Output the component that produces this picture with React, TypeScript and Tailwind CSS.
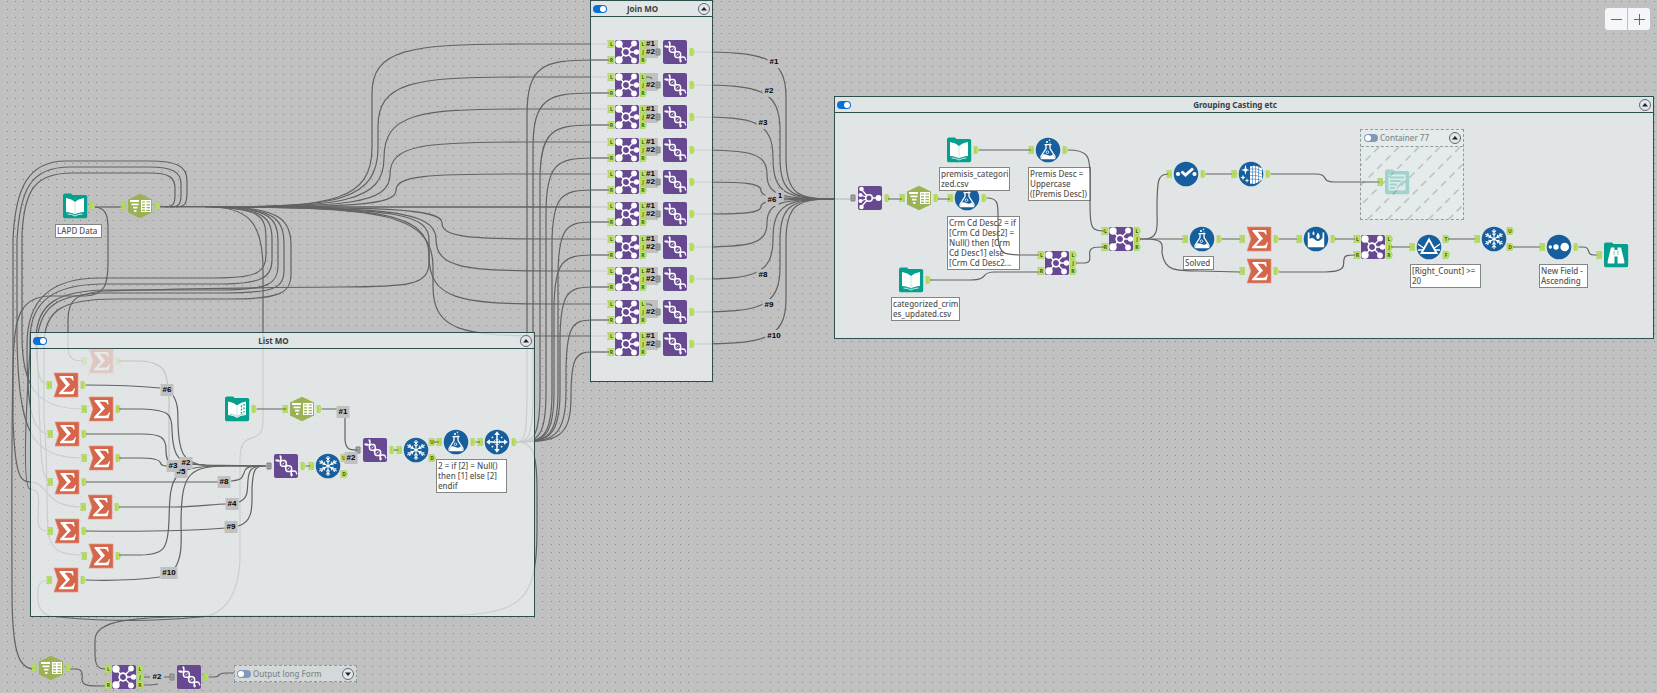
import React from "react";

type Pt = [number, number];
type Kind =
  | "book" | "report" | "hex" | "sigma" | "join" | "union" | "fan" | "formula"
  | "unique" | "cross" | "check" | "cleanse" | "rain" | "filter" | "sort" | "browse" | "output";

const WIRE = "#626262";

/* Smooth orthogonal wire that turns into a vertical run at mx. */
function wire(x1: number, y1: number, mx: number, x2: number, y2: number, cap = 45, cap2 = cap) {
  const s = Math.sign(y2 - y1) || 1;
  const d = Math.abs(y2 - y1) / 2;
  const a = Math.min(d, cap) * s;
  const b = Math.min(d, cap2) * s;
  return `M${x1} ${y1}C${x1 + (mx - x1) * 0.75} ${y1} ${mx} ${y1 + a * 0.1} ${mx} ${y1 + a}L${mx} ${y2 - b}C${mx} ${y2 - b * 0.1} ${mx + (x2 - mx) * 0.25} ${y2} ${x2} ${y2}`;
}

const rowY = Array.from({ length: 10 }, (_, k) => Math.round(52.2 + 32.45 * k));

const leftX = [372, 378, 384, 390, 396, 420, 442, 436, 429, 433];
const rightX = [527, 533, 540, 546, 552, 558, 554, 560, 566, 571];
const outX = [786, 780, 773, 767, 761, 761, 767, 773, 780, 786];

const backWires: string[] = [
  "M95 207H122",
  "M160 207H613",
  "M160 206.500H330",
  ...rowY.map((y, k) => (k === 5 ? "M300 207H613" : wire(215, 207, leftX[k], k > 4 ? 550 : 520, y - 8, 60, 50) + "H613")),
  ...rowY.map((y, k) => wire(516, 442, rightX[k], 592, y + 8, 50, 55)),
  ...rowY.map((y, k) => wire(696, y, outX[k], 835, 199, 45, 42) + "H852"),
  "M165 207C173 207 175 204 175 195V188C175 177 168 173 150 173H72C35 173 24 190 22 235V335C22 385 35 409 83 409",
  "M170 207C180 207 181 203 181 194V184C181 172 172 167 150 167H70C30 167 20 190 17 240V340C19 430 30 458 83 458",
  "M176 207C186 207 187 202 187 192V180C187 166 176 161 150 161H66C27 161 15 190 13 240V420C15 475 20 482 30 482C50 482 42 507 82 507",
  "M95 207C105 208 108 214 108 228V262C108 285 105 295 85 296H50C22 297 16 315 14 345",
  "M14 345C11 390 12 560 12 590C12 650 18 669 34 669",
  "M205 207C262 208 266 216 266 240V255C266 272 258 278 215 278H100C50 278 27 300 27 345C27 400 30 434 50 434",
  "M210 207C265 208 272 218 272 240V260C272 278 262 284 215 284H100C55 285 30 300 30 340V350C22 470 26 488 30 489C42 490 38 500 38 520C38 529 42 531 50 531",
  "M215 207C270 208 278 218 278 242V265C278 284 268 290 220 290H105C60 291 36 302 36 340C37 378 40 385 50 385",
  "M220 207C276 208 284 220 284 245V270C284 288 274 293 225 293H105C60 294 38 304 37 345C41 460 40 476 50 482",
  "M225 207C282 208 291 222 291 245V274C291 293 280 299 230 299H115C62 299 44 310 44 345V420C48 460 46 500 48 530C50 552 62 555 83 555",
  "M215 207C250 209 263 225 263 270V420C263 450 240 425 240 460V560C238 595 225 615 200 617C140 623 80 620 50 616C35 612 38 595 38 590C38 583 42 580 50 580",
  "M240 207C400 208 429 215 429 240V262C429 285 410 287 340 287C180 288 150 290 104 291C75 294 68 300 68 320V345C68 358 72 361 83 361",
  "M516 442C532 442 537 450 537 490V530C537 605 520 614 440 616H210C130 617 95 620 95 640V655C95 665 98 669 105 669",
  "M69 669H76C84 669 82 677 82 679C82 686 88 686 105 686",
  "M144 677H150M164 677H170M144 685H150C155 685 157 684 158 684",
  "M208 677H214C222 677 216 673 226 673H234",
];

const frontWires: string[] = [
  "M86 385C120 385 140 386 160 388M172 394C178 402 178 410 178 425C179 450 182 464 205 465L266 466",
  "M119 409H142C168 410 172 413 172 430C173 458 178 464 205 465",
  "M86 434H142C162 434 166 438 166 450C166 459 168 462 172 465",
  "M119 458H140C152 458 158 459 160 462C161 466 164 466 170 466",
  "M86 482H218M231 481C243 480 242 477 244 473C245 467 249 467 256 466",
  "M119 507H175C200 507 212 504 226 504M239 502C249 498 247 490 248 480C249 469 252 467 260 466",
  "M86 531C160 532 200 530 226 528M238 526C254 522 252 505 252 488C253 470 255 467 262 466",
  "M119 555H140C165 555 168 548 169 520C170 475 172 467 220 466H266",
  "M86 580C120 581 145 579 160 577M175 568C183 555 181 540 181 520C182 478 186 466 225 466",
  "M186 464L220 466H266",
  "M257 409H286M322 409H338M345 418V440C346 450 350 450 357 450",
  "M306 466H310M394 450H398M434 442H439M476 442H480",
  ...rowY.map((y) => `M590 ${y + 8}H609`),
  "M646 77C650 77 651 77 652 79M646 304C650 304 651 304 652 306",
  "M888 199H902M938 199H950M979 150H1031M1068 150C1088 150 1090 156 1090 175V205C1090 229 1092 231 1104 231",
  "M987 198C998 198 998 204 998 215V238C999 255 1005 255 1025 255H1039",
  "M930 280H970C990 280 980 272 994 272H1039",
  "M1076 263H1083C1094 263 1088 255 1090 251C1091 247 1096 247 1104 247",
  "M1140 239H1144C1160 239 1157 225 1157 210C1157 180 1158 174 1168 174",
  "M1140 239H1183M1144 239C1166 239 1162 245 1162 252C1164 271 1175 271 1200 271L1240 272",
  "M1206 174H1232M1271 174H1315C1330 174 1320 182 1334 182H1379",
  "M1222 239H1240M1279 239H1297M1335 239H1355M1279 272H1325C1350 272 1342 262 1344 260C1344 255 1348 255 1355 255",
  "M1391 247H1410M1448 239H1475M1513 247H1540M1579 247H1583C1592 247 1585 255 1594 255H1597",
];

/* ---------- tool glyphs, each centred on 0,0 in a 24px box ---------- */

const spokes = [0, 60, 120, 180, 240, 300];

/* One strand of the double helix that runs down the diagonal of the tile. */
function strand(sign: number) {
  let d = "";
  for (let n = 0; n <= 36; n++) {
    const t = n / 36;
    const w = sign * 3.1 * Math.sin(Math.PI * (3 * t + 0.5));
    d += `${n ? "L" : "M"}${(-8 + 16 * t + w * 0.72).toFixed(2)} ${(-8 + 16 * t - w * 0.72).toFixed(2)}`;
  }
  return d;
}
const strandA = strand(1);
const strandB = strand(-1);

function Glyph({ kind }: { kind: Kind }) {
  const purple = <rect x={-12} y={-12} width={24} height={24} rx={2} fill="#674991" />;
  const blue = <circle r={12.3} fill="#175f9c" />;
  const folder = <path d="M-12 -10.500Q-12 -12.500 -10 -12.500H-4L-2.500 -11H10.500Q12.200 -11 12.200 -9.500V10.500Q12.200 12.200 10.500 12.200H-10.500Q-12 12.200 -12 10.500Z" fill="#049f8d" />;
  switch (kind) {
    case "book":
      return <g>{folder}<path d="M-9 -8Q-3 -7 0 -4Q3 -7 9 -8V6Q3 6.500 0 8.500Q-3 6.500 -9 6Z" fill="#fff" /><path d="M0 -4V8" stroke="#b4dfd9" strokeWidth={0.800} /><path d="M-7.500 8Q-3 8 0 10Q3 8 7.500 8" stroke="#fff" strokeWidth={0.800} fill="none" /></g>;
    case "report":
      return <g>{folder}<path d="M-9 -7.500Q-3 -6.500 0 -3.500Q3 -6.500 9 -7.500V6Q3 6.500 0 9Q-3 6.500 -9 6Z" fill="#fff" /><path d="M0 -3.500V7" stroke="#b4dfd9" strokeWidth={0.800} /><path d="M-7.500 5Q-3 5.500 0 7.500Q3 5.500 7.500 5" stroke="#7fcbc0" strokeWidth={0.800} fill="none" /><path d="M4.500 -3.500v1.700M4.500 -0.200v1.700M4.500 3v1.400M7 -5v1.700M7 -1.500v1.700M7 2v1.400" stroke="#049f8d" strokeWidth={1.300} /></g>;
    case "hex":
      return <g><path d="M0 -12.300L12 -6.500V6.500L0 12.300L-12 6.500V-6.500Z" fill="#9bb155" /><path d="M-10 -5H-1M-8.500 -1.700H-1.500M-7 1.600H-2.500M-6 4.800H-3.500" stroke="#fff" strokeWidth={1.800} /><rect x={1} y={-6} width={10} height={12} fill="#fff" /><path d="M2 -4H5M6.500 -4H10M2 -1.200H5M6.500 -1.200H10M2 1.600H5M6.500 1.600H10M2 4.400H5M6.500 4.400H10" stroke="#9bb155" strokeWidth={1.200} /></g>;
    case "sigma":
      return <g><path d="M-12 -12H12V12H-12L-8 0Z" fill="#d5664b" stroke="#e39680" strokeWidth={0.700} /><path d="M-6.500 -9H7L7.700 -4.500H6.500Q5.800 -7.300 3 -7.300H-1.500L4 -0.500L-3 6.800H4Q6.800 6.800 8 3.300H9L7.500 9.300H-7V8L0 0.500L-6.500 -7.800Z" fill="#fff" /></g>;
    case "join":
      return <g>{purple}<path d="M-8 -8L-1 0M-8 8L-1 0M7 -8L-1 0M7 8L-1 0M-1 0H10" stroke="#fff" strokeWidth={1.300} /><circle cx={-8} cy={-8} r={3.700} fill="#fff" /><circle cx={-8} cy={8} r={3.700} fill="#fff" /><circle cx={7} cy={-8.500} r={2.900} fill="#fff" /><circle cx={9.500} cy={0} r={2.700} fill="#fff" /><circle cx={7} cy={8.500} r={2.900} fill="#fff" /><circle cx={-1} cy={0} r={3.800} fill="#674991" stroke="#fff" strokeWidth={1.700} /></g>;
    case "fan":
      return <g>{purple}<path d="M-8.500 -8.500L-1 0M-9.500 -3L-1 0M-9.500 3L-1 0M-8.500 8.500L-1 0M-1 0H9" stroke="#fff" strokeWidth={1.300} /><circle cx={-8.500} cy={-9} r={2.300} fill="#fff" /><circle cx={-9.500} cy={-3} r={2} fill="#fff" /><circle cx={-9.500} cy={3} r={2} fill="#fff" /><circle cx={-8.500} cy={9} r={2.300} fill="#fff" /><circle cx={8.500} cy={0} r={2.900} fill="#fff" /><circle cx={-1} cy={0} r={3.300} fill="#674991" stroke="#fff" strokeWidth={1.600} /></g>;
    case "union":
      return <g>{purple}<g fill="none" stroke="#fff" strokeWidth={1.500}><path d={strandA} /><path d={strandB} /><path d="M-3.500 -5.800L-5.800 -3.500M-1.600 -3.600L-3.600 -1.600M-1.300 1.300L1.300 -1.300M1.600 3.600L3.600 1.600M3.500 5.800L5.800 3.500" strokeWidth={0.900} /><path d="M-10.500 -5.800H-7M-6 -10.500L-5.500 -8M6 10V7.500M10 6L11 8.500" strokeWidth={1.200} /></g></g>;
    case "formula":
      return <g>{blue}<g fill="none" stroke="#fff" strokeWidth={1.300}><path d="M-2 -5V-1.500L-6.800 6Q-7.800 8.700 -5 8.700H5Q7.800 8.700 6.800 6L2 -1.500V-5M-3.500 -5.300H3.500" /></g><path d="M-5 4.200L-6.300 6.500Q-6.800 8.300 -5 8.300H5Q6.800 8.300 6.300 6.500L5 4.200Q2 6.500 0 5.300T-5 4.200Z" fill="#fff" /><circle cx={-0.500} cy={2.200} r={1.300} fill="none" stroke="#fff" strokeWidth={0.800} /><circle cx={-1} cy={-8} r={1.100} fill="#fff" /><circle cx={1.500} cy={-9.800} r={0.800} fill="#fff" /><circle cx={2} cy={-7} r={0.600} fill="#fff" /></g>;
    case "unique":
      return <g>{blue}{spokes.map((a) => (<path key={a} transform={`rotate(${a})`} d="M0 0V-10M-2 -8.500L0 -6.300L2 -8.500M-1.700 -5.500L0 -3.500L1.700 -5.500" stroke="#fff" strokeWidth={1.100} fill="none" />))}</g>;
    case "cross":
      return <g>{blue}<path d="M-8 0H8M0 -8V8" stroke="#fff" strokeWidth={1.500} /><circle r={2.900} fill="none" stroke="#fff" strokeWidth={1} strokeDasharray="1.500 1" />{[0, 90, 180, 270].map((a) => (<path key={a} transform={`rotate(${a})`} d="M0 -10.800L2.800 -7H-2.800Z" fill="#fff" />))}{[45, 135, 225, 315].map((a) => (<circle key={a} transform={`rotate(${a})`} cx={0} cy={-6.500} r={0.900} fill="#fff" />))}</g>;
    case "check":
      return <g>{blue}<circle cx={-8} cy={0} r={2.100} fill="#fff" /><circle cx={8.500} cy={0} r={2.100} fill="#fff" /><path d="M-4.500 -2.500L-0.500 1L7 -5.500" fill="none" stroke="#fff" strokeWidth={2.900} /></g>;
    case "cleanse":
      return <g>{blue}<path d="M-1 -7.500Q5 -9.500 11 -5.500V5.500Q8 9 3 10L-1 9.500Z" fill="#fff" /><path d="M1.500 -8V10M4.500 -8V10M7.500 -7V9M-1 -5Q6 -6 11 -3M-1 -2Q6 -3 11 0M-1 1.500Q6 1 11 3M-1 5Q5 5 10 6" stroke="#175f9c" strokeWidth={0.500} fill="none" /><path d="M-5.500 -9.500L-4.500 -5L-1.500 -4L-4.500 -3L-5.500 1L-6.500 -3L-10 -4L-6.500 -5ZM-8 0.500L-7.300 2.800L-5.300 3.500L-7.300 4.200L-8 6.500L-8.700 4.200L-10.700 3.500L-8.700 2.800ZM-4 4L-3.400 6L-1.500 6.500L-3.400 7L-4 9L-4.600 7L-6.500 6.500L-4.600 6Z" fill="#fff" /></g>;
    case "rain":
      return <g>{blue}<path d="M-8.200 -6.500V8.300H8.200V-6.500H6.500V-1Q4.500 1.500 2.500 2Q0 2.300 -2 -0.300Q-4 -2 -6.500 0V-6.500Z" fill="#fff" /><path d="M-2.500 -8Q-4.600 -4.800 -2.500 -3.800Q-0.400 -4.800 -2.500 -8ZM2 -6.500Q-1.600 -1.200 2 0.200Q5.600 -1.200 2 -6.500Z" fill="#fff" /></g>;
    case "filter":
      return <g>{blue}<path d="M-11 -3L-4 2M11 -3L4 2M-11 3L-6 3M11 3L6 3" stroke="#fff" strokeWidth={1.300} /><path d="M0 -7.500L7.500 6H-7.500Z" fill="#175f9c" stroke="#fff" strokeWidth={1.900} /></g>;
    case "sort":
      return <g>{blue}<circle cx={-8.700} r={1.700} fill="#fff" /><circle cx={-3} r={2.700} fill="#fff" /><circle cx={5.700} r={4.300} fill="#fff" /></g>;
    case "browse":
      return <g>{folder}<path d="M-5 -7.500H-1.500V-5H1.500V-7.500H5L8.300 6V8.500H1.500V1.500H-1.500V8.500H-8.300V6Z" fill="#fff" /><path d="M-2 -4.500V0M2 -4.500V0" stroke="#7fcbc0" /></g>;
    case "output":
      return <g opacity={0.3}>{folder}<rect x={-8.500} y={-7.500} width={17} height={16} rx={1} fill="#fff" opacity={0.8} /><path d="M-7 -4.500H7M-7 -1H4M-7 2.500H0M-7 6H-2M0 6L7 -1.500" stroke="#049f8d" strokeWidth={1.800} /></g>;
  }
}

/* ---------- anchors ---------- */

function In({ p, t }: { p: Pt; t?: string }) {
  return (
    <g transform={`translate(${p[0]} ${p[1]})`}>
      <path d={t ? "M-3.500 -3.500H3V3.500H-3.500L-2.200 0Z" : "M-2.500 -3.500H2.500V3.500H-2.500L-1.500 0Z"} fill="#bce35d" stroke="#a9cf6c" strokeWidth={0.700} />
      {t ? <text x={0.500} y={2} textAnchor="middle" className="fill-[#3d5a1c] text-[5px] font-bold">{t}</text> : <path d="M-0.500 -1.800V1.800M1.200 -2.500V2.500" stroke="#a3cc4c" strokeWidth={0.700} />}
    </g>
  );
}

function Out({ p, t }: { p: Pt; t?: string }) {
  return (
    <g transform={`translate(${p[0]} ${p[1]})`}>
      <path d={t ? "M-3 -3.500H2L3.500 0L2 3.500H-3Z" : "M-2 -3.500H1L2.500 0L1 3.500H-2Z"} fill="#bce35d" stroke="#a9cf6c" strokeWidth={0.700} />
      {t ? <text y={2} textAnchor="middle" className="fill-[#3d5a1c] text-[5px] font-bold">{t}</text> : <path d="M-0.700 -2.200V2.200" stroke="#a3cc4c" strokeWidth={0.700} />}
    </g>
  );
}

function Multi({ p }: { p: Pt }) {
  return (
    <g transform={`translate(${p[0]} ${p[1]})`}>
      <path d="M-2 -3H2V3H-2Z" fill="#b5b8b8" stroke="#7c7f7f" />
      <path d="M0 -3V3M-2 0H2" stroke="#7c7f7f" strokeWidth={0.700} />
    </g>
  );
}

type ToolSpec = { k: Kind; x: number; y: number; i?: "one" | "multi" | "LR"; o?: "one" | "LJR" | "UD" | "TF"; faded?: boolean };

const sigmas: Pt[] = [[66, 385], [101, 409], [67, 434], [101, 458], [67, 482], [100, 507], [67, 531], [101, 556], [66, 580]];

const tools: ToolSpec[] = [
  { k: "book", x: 75, y: 206, o: "one" },
  { k: "hex", x: 140, y: 206, i: "one", o: "one" },
  { k: "hex", x: 51, y: 668, i: "one", o: "one" },
  { k: "join", x: 124, y: 677, i: "LR", o: "LJR" },
  { k: "union", x: 189, y: 677, i: "multi", o: "one" },
  { k: "sigma", x: 101, y: 361, i: "one", o: "one", faded: true },
  ...sigmas.map(([x, y]): ToolSpec => ({ k: "sigma", x, y, i: "one", o: "one" })),
  { k: "report", x: 237, y: 409, o: "one" },
  { k: "hex", x: 302, y: 409, i: "one", o: "one" },
  { k: "union", x: 286, y: 466, i: "multi", o: "one" },
  { k: "unique", x: 328, y: 466, i: "one", o: "UD" },
  { k: "union", x: 375, y: 450, i: "multi", o: "one" },
  { k: "unique", x: 416, y: 450, i: "one", o: "UD" },
  { k: "formula", x: 456, y: 442, i: "one", o: "one" },
  { k: "cross", x: 497, y: 442, i: "one", o: "one" },
  ...rowY.flatMap((y): ToolSpec[] => [
    { k: "join", x: 627, y, i: "LR", o: "LJR" },
    { k: "union", x: 675, y, i: "multi", o: "one" },
  ]),
  { k: "fan", x: 870, y: 198, i: "multi", o: "one" },
  { k: "hex", x: 919, y: 198, i: "one", o: "one" },
  { k: "formula", x: 967, y: 198, i: "one", o: "one" },
  { k: "book", x: 959, y: 150, o: "one" },
  { k: "formula", x: 1048, y: 150, i: "one", o: "one" },
  { k: "join", x: 1057, y: 263, i: "LR", o: "LJR" },
  { k: "book", x: 911, y: 280, o: "one" },
  { k: "join", x: 1121, y: 239, i: "LR", o: "LJR" },
  { k: "check", x: 1186, y: 174, i: "one", o: "one" },
  { k: "cleanse", x: 1251, y: 174, i: "one", o: "one" },
  { k: "formula", x: 1202, y: 239, i: "one", o: "one" },
  { k: "sigma", x: 1259, y: 239, i: "one", o: "one" },
  { k: "sigma", x: 1259, y: 271, i: "one", o: "one" },
  { k: "rain", x: 1316, y: 239, i: "one", o: "one" },
  { k: "join", x: 1373, y: 247, i: "LR", o: "LJR" },
  { k: "filter", x: 1429, y: 247, i: "one", o: "TF" },
  { k: "unique", x: 1494, y: 239, i: "one", o: "UD" },
  { k: "sort", x: 1559, y: 247, i: "one", o: "one" },
  { k: "browse", x: 1616, y: 255, i: "one" },
  { k: "output", x: 1397, y: 182, i: "one" },
];

function Tool({ k, x, y, i, o, faded }: ToolSpec) {
  return (
    <g opacity={faded ? 0.22 : 1}>
      <g transform={`translate(${x} ${y})`}><Glyph kind={k} /></g>
      {i === "one" && <In p={[x - 17, y]} />}
      {i === "multi" && <Multi p={[x - 17, y]} />}
      {i === "LR" && <><In p={[x - 16, y - 8]} t="L" /><In p={[x - 16, y + 8]} t="R" /></>}
      {o === "one" && <Out p={[x + 17, y]} />}
      {o === "LJR" && <><Out p={[x + 16, y - 8]} t="L" /><Out p={[x + 16, y]} t="J" /><Out p={[x + 16, y + 8]} t="R" /></>}
      {o === "UD" && <><Out p={[x + 16, y - 8]} t="U" /><Out p={[x + 16, y + 8]} t="D" /></>}
      {o === "TF" && <><Out p={[x + 17, y - 8]} t="T" /><Out p={[x + 17, y + 8]} t="F" /></>}
    </g>
  );
}

/* ---------- html pieces ---------- */

function Toggle({ label, on }: { label: string; on: boolean }) {
  return (
    <input
      type="checkbox"
      role="switch"
      aria-label={label}
      defaultChecked={on}
      className="relative h-[8px] w-[14px] shrink-0 appearance-none rounded-full bg-[#8496bd] before:absolute before:top-px before:left-px before:size-[6px] before:rounded-full before:bg-white checked:bg-[#0b6fd6] checked:before:left-[7px]"
    />
  );
}

function Chevron({ down, label }: { down?: boolean; label: string }) {
  return (
    <button type="button" aria-label={label} className="flex size-[12px] shrink-0 items-center justify-center rounded-full border border-[#66666f] bg-[#e4e6ee]">
      <svg width="6" height="4" viewBox="0 0 6 4" aria-hidden="true">
        <path d={down ? "M0 0.500H6L3 4Z" : "M0 3.500H6L3 0Z"} fill="#222" />
      </svg>
    </button>
  );
}

function Container({ title, place }: { title: string; place: string }) {
  return (
    <section className={`absolute border border-[#2f4f4f] bg-[#edf1f2]/75 ${place}`}>
      <header className="flex h-[16px] items-center border-b border-[#2f4f4f] pr-[2px]">
        <h2 className="flex-1 pr-[4px] text-center text-[8px] leading-[14px] font-bold text-[#2f4248]">{title}</h2>
        <Chevron label={`Collapse ${title}`} />
        <span className="absolute left-[2px] flex"><Toggle label={`Enable ${title}`} on /></span>
      </header>
    </section>
  );
}

function Note({ place, children }: { place: string; children: string }) {
  return (
    <p className={`absolute border border-[#858585] bg-white py-px pl-px text-[8px] leading-[10px] font-medium whitespace-pre text-[#555] ${place}`}>
      {children}
    </p>
  );
}

const tags: [string, number, number][] = [
  ["#6", 167, 390], ["#2", 186, 463], ["#5", 181, 472], ["#3", 173, 466],
  ["#8", 224, 482], ["#4", 232, 504], ["#9", 231, 527], ["#10", 169, 573], ["#1", 343, 412], ["#2", 351, 458],
  ["#1", 774, 62], ["#2", 769, 91], ["#3", 763, 123], ["1", 780, 196], ["#6", 772, 200],
  ["#8", 763, 275], ["#9", 769, 305], ["#10", 774, 336], ["#2", 157, 677],
];

function Dots() {
  let d = "";
  for (let r = 0; r < 180; r++) {
    for (let c = 0; c < 340; c++) d += `M${Math.round(7.2 + 8.11 * (c - 1))} ${Math.round(0.8 + 8.11 * r)}h1v1h-1z`;
  }
  return <path d={d} fill="#868686" shapeRendering="crispEdges" />;
}

export default function App() {
  return (
    <main className="relative min-h-screen w-full overflow-hidden bg-[#c0c0c0] font-['Noto_Sans','Open_Sans',sans-serif]">
      <svg className="absolute inset-0 size-full" aria-hidden="true">
        <Dots />
        <g fill="none" stroke={WIRE} strokeWidth={1.200}>{backWires.map((d, n) => <path key={n} d={d} />)}</g>
      </svg>

      <Container title="List MO" place="left-[30px] top-[332px] h-[285px] w-[505px]" />
      <Container title="Join MO" place="left-[590px] top-0 h-[382px] w-[123px]" />
      <Container title="Grouping Casting etc" place="left-[834px] top-[96px] h-[243px] w-[820px]" />

      <section className="absolute top-[129px] left-[1360px] h-[91px] w-[104px] border border-dashed border-[#8f9c9c] bg-[#e8efee]/60">
        <svg className="absolute inset-0 top-[17px] h-[73px] w-full" aria-hidden="true">
          <g stroke="#b9c3c2" strokeWidth={1.500} strokeDasharray="7 5">
            {[18, 38, 58, 79, 99, 119, 140, 160].map((s) => <path key={s} d={`M${s} 0L${s - 80} 80`} />)}
          </g>
        </svg>
        <header className="relative flex h-[17px] items-center gap-[2px] border-b border-dashed border-[#8f9c9c] pr-[2px] pl-[3px]">
          <Toggle label="Enable Container 77" on={false} />
          <h2 className="flex-1 text-[8px] leading-[14px] font-medium text-[#7f898c]">Container 77</h2>
          <Chevron label="Collapse Container 77" />
        </header>
      </section>

      <section className="absolute top-[665px] left-[234px] flex h-[17px] w-[123px] items-center gap-[2px] border border-dashed border-[#8f9c9c] bg-[#d3d8d9] pr-[2px] pl-[2px]">
        <Toggle label="Enable Output long Form" on={false} />
        <h2 className="flex-1 text-[8px] leading-[14px] font-medium text-[#7f898c]">Output long Form</h2>
        <Chevron down label="Expand Output long Form" />
      </section>

      {rowY.map((y) => <div key={y} style={{ top: y - 12 }} className="absolute left-[644px] h-[18px] w-[14px] bg-[#c0c0c0]" />)}

      <svg className="absolute inset-0 size-full" aria-hidden="true">
        {tools.map((t, n) => <Tool key={n} {...t} />)}
      </svg>

      <Note place="left-[55px] top-[224px] w-[47px]">LAPD Data</Note>
      <Note place="left-[436px] top-[459px] w-[71px]">{"2 = if [2] = Null()\nthen [1] else [2]\nendif"}</Note>
      <Note place="left-[939px] top-[167px] w-[71px]">{"premisis_categori\nzed.csv"}</Note>
      <Note place="left-[1028px] top-[167px] w-[63px]">{"Premis Desc =\nUppercase\n([Premis Desc])"}</Note>
      <Note place="left-[947px] top-[216px] w-[73px]">{"Crm Cd Desc2 = if\n[Crm Cd Desc2] =\nNull() then [Crm\nCd Desc1] else\n[Crm Cd Desc2..."}</Note>
      <Note place="left-[891px] top-[297px] w-[69px]">{"categorized_crim\nes_updated.csv"}</Note>
      <Note place="left-[1183px] top-[256px] w-[31px]">Solved</Note>
      <Note place="left-[1410px] top-[264px] w-[71px]">{"[Right_Count] >=\n20"}</Note>
      <Note place="left-[1539px] top-[264px] w-[49px]">{"New Field -\nAscending"}</Note>

      <svg className="pointer-events-none absolute inset-0 size-full" aria-hidden="true">
        <g fill="none" stroke={WIRE} strokeWidth={1.200}>
          {frontWires.map((d, n) => <path key={n} d={d} />)}
          <path d="M119 361H140C165 362 168 372 169 400V460" opacity={0.25} />
        </g>
      </svg>

      {tags.map(([t, x, y], n) => (
        <span key={n} style={{ left: x, top: y }} className="absolute -translate-x-1/2 -translate-y-1/2 bg-[#c0c0c0] px-[2px] font-['Liberation_Sans',sans-serif] text-[8px] leading-[12px] font-bold text-black">{t}</span>
      ))}
      {rowY.map((y, k) => (
        <div key={y} style={{ top: y - 12 }} className="absolute left-[646px] flex h-[16px] w-[10px] flex-col justify-end font-['Liberation_Sans',sans-serif] text-[8px] leading-[8px] font-bold text-black">
          {k !== 1 && k !== 8 && <span>#1</span>}
          <span>#2</span>
        </div>
      ))}

      <div className="absolute top-[8px] right-[7px] flex gap-px overflow-hidden rounded-[3px]">
        <button type="button" aria-label="Zoom out" className="flex size-[22px] items-center justify-center bg-[#f4f6fa]">
          <svg width="11" height="11" aria-hidden="true"><path d="M0 5.500H11" stroke="#5a6788" /></svg>
        </button>
        <button type="button" aria-label="Zoom in" className="flex size-[22px] items-center justify-center bg-[#f4f6fa]">
          <svg width="11" height="11" aria-hidden="true"><path d="M0 5.500H11M5.500 0V11" stroke="#5a6788" /></svg>
        </button>
      </div>
    </main>
  );
}
